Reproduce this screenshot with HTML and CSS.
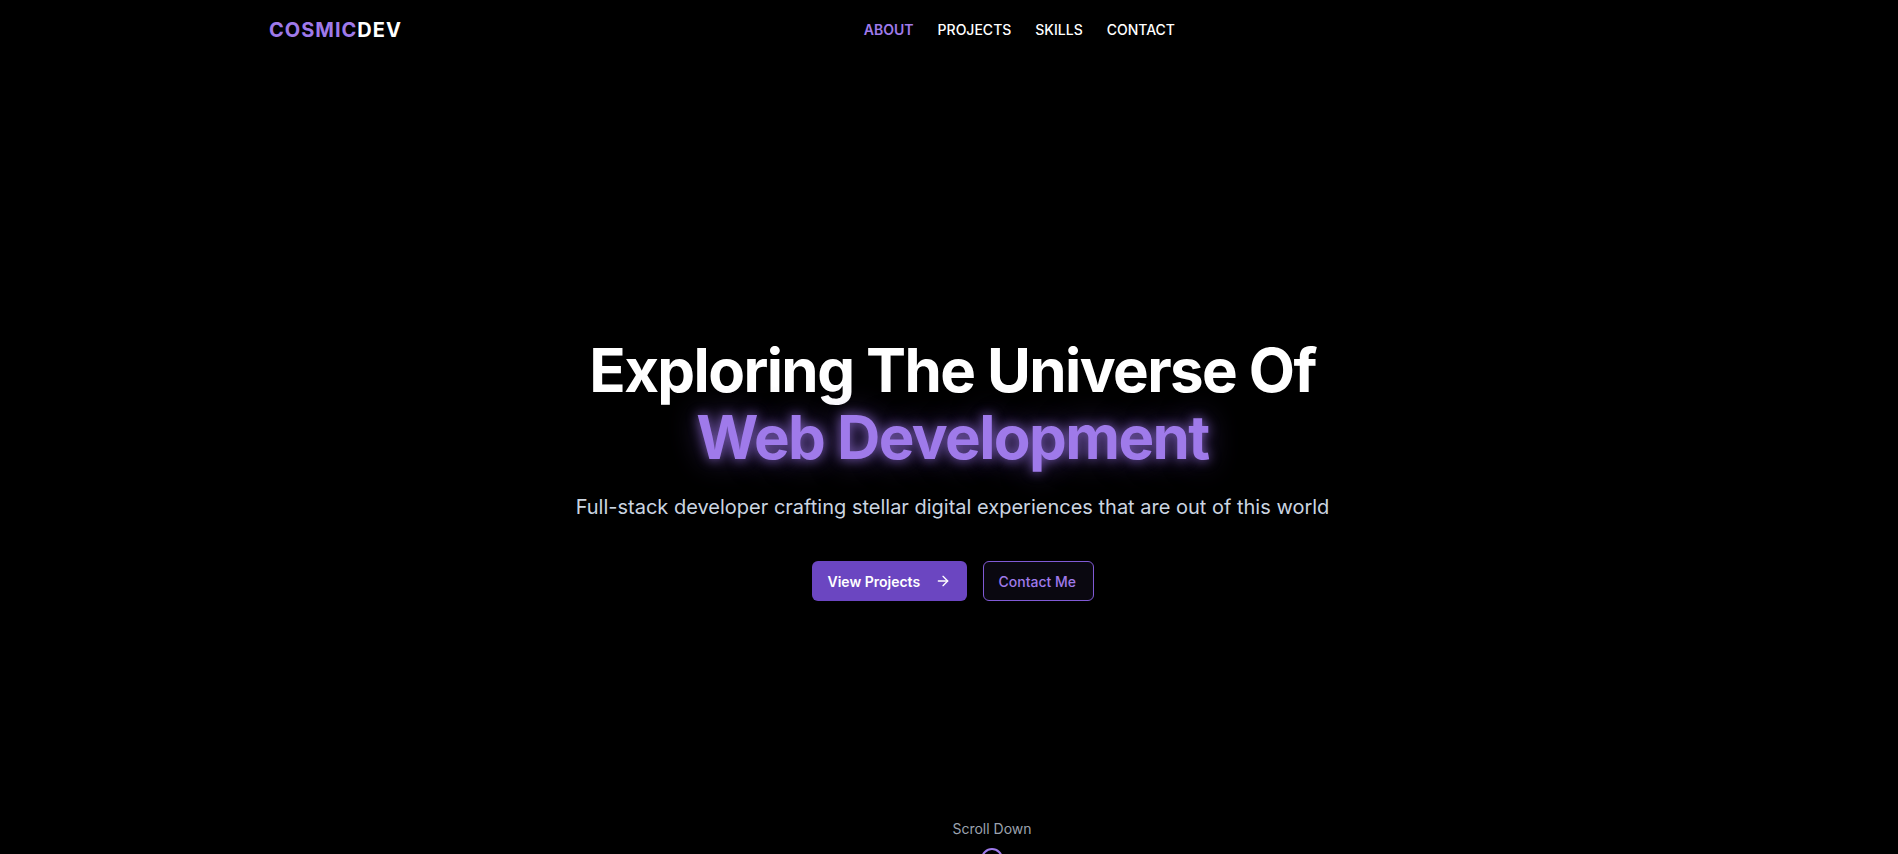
FILE: index.html
```html
<!DOCTYPE html>
<html lang="en">
<head>
<meta charset="utf-8">
<title>CosmicDev</title>
<link rel="stylesheet" href="styles.css">
</head>
<body>
<header class="header">
  <div class="header-inner">
    <a class="logo" href="#"><span class="logo-accent">COSMIC</span>DEV</a>
    <nav class="nav">
      <a class="nav-link active" href="#">ABOUT</a>
      <a class="nav-link" href="#">PROJECTS</a>
      <a class="nav-link" href="#">SKILLS</a>
      <a class="nav-link" href="#">CONTACT</a>
    </nav>
    <div class="header-spacer"></div>
  </div>
</header>
<main class="hero">
  <h1 class="hero-title">Exploring The Universe Of<br><span class="glow">Web Development</span></h1>
  <p class="hero-sub">Full-stack developer crafting stellar digital experiences that are out of this world</p>
  <div class="hero-actions">
    <a class="btn btn-primary" href="#">View Projects
      <svg class="btn-icon" viewBox="0 0 24 24" width="16" height="16" fill="none" stroke="currentColor" stroke-width="2" stroke-linecap="round" stroke-linejoin="round"><path d="M5 12h14"/><path d="m12 5 7 7-7 7"/></svg>
    </a>
    <a class="btn btn-outline" href="#">Contact Me</a>
  </div>
  <div class="scroll-down">
    <span class="scroll-label">Scroll Down</span>
    <svg viewBox="0 0 24 24" width="24" height="24" fill="none" stroke="#9f7aea" stroke-width="2" stroke-linecap="round" stroke-linejoin="round"><circle cx="12" cy="12" r="10"/><path d="M12 8v8"/><path d="m8 12 4 4 4-4"/></svg>
  </div>
</main>
</body>
</html>
```
FILE: styles.css
```css
* { box-sizing: border-box; }
html, body {
  margin: 0;
  padding: 0;
  background: #000;
  overflow: hidden;
}
body {
  font-family: Inter, "Noto Sans", "Liberation Sans", sans-serif;
  color: #fff;
  height: 100vh;
}
a { text-decoration: none; color: inherit; }

.header {
  height: 59px;
}
.header-inner {
  width: 1376px;
  margin: 0 auto;
  height: 100%;
  display: flex;
  align-items: center;
  justify-content: space-between;
  padding-left: 8px;
}
.logo {
  font-size: 20px;
  font-weight: 700;
  letter-spacing: 1px;
  color: #fff;
  margin-top: 1px;
}
.logo-accent { color: #9f7aea; }
.nav {
  display: flex;
  gap: 24px;
}
.nav-link {
  font-size: 14px;
  font-weight: 500;
  color: #fff;
}
.nav-link.active { color: #9f7aea; font-weight: 600; }
.header-spacer { width: 0; }

.hero {
  position: relative;
  height: calc(100vh - 59px);
  display: flex;
  flex-direction: column;
  align-items: center;
  padding-top: 278px;
  padding-left: 7px;
  text-align: center;
}
.hero-title {
  margin: 0;
  font-size: 60px;
  line-height: 67px;
  font-weight: 700;
  letter-spacing: -1.6px;
  color: #fff;
}
.glow {
  color: #9f7aea;
  text-shadow: 0 0 12px rgba(159, 122, 234, 0.75), 0 0 30px rgba(128, 90, 213, 0.55);
}
.hero-sub {
  margin: 22px 0 0;
  font-size: 20px;
  line-height: 28px;
  color: #cbd5e1;
}
.hero-actions {
  margin-top: 40px;
  display: flex;
  gap: 16px;
}
.btn {
  height: 40px;
  display: inline-flex;
  align-items: center;
  border-radius: 6px;
  font-size: 14px;
  font-weight: 600;
}
.btn-primary {
  background: #6b46c1;
  color: #fff;
  padding: 0 16px;
  width: 155px;
}
.btn-icon { margin-left: auto; }
.btn-outline {
  border: 1px solid #805ad5;
  color: #9f7aea;
  background: #0a0810;
  padding: 0 15px;
  width: 111px;
  font-weight: 500;
}
.scroll-down {
  position: absolute;
  left: 50%;
  bottom: -17px;
  width: 86px;
  display: flex;
  flex-direction: column;
  align-items: center;
  gap: 8px;
}
.scroll-label {
  font-size: 14px;
  line-height: 20px;
  color: #9ca3af;
}
```
